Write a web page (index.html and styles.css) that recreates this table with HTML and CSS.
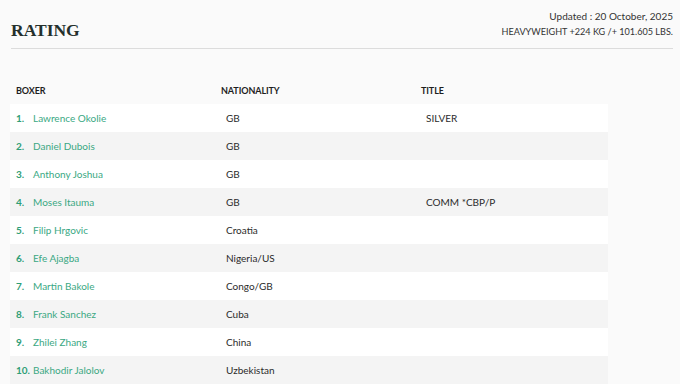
FILE: index.html
```html
<!DOCTYPE html>
<html>
<head>
<meta charset="utf-8">
<link rel="stylesheet" href="styles.css">
</head>
<body>
<div class="page">
  <header class="top">
    <h1 class="title">RATING</h1>
    <div class="meta">
      <div class="updated">Updated : 20 October, 2025</div>
      <div class="weight">HEAVYWEIGHT +224 KG /+ 101.605 LBS.</div>
    </div>
  </header>
  <table class="rating">
    <colgroup><col class="w1"><col class="w2"><col class="w3"></colgroup>
    <thead>
      <tr><th class="c1">BOXER</th><th>NATIONALITY</th><th>TITLE</th></tr>
    </thead>
    <tbody>
      <tr><td class="c1"><span class="num">1.</span><span class="name">Lawrence Okolie</span></td><td>GB</td><td>SILVER</td></tr>
      <tr><td class="c1"><span class="num">2.</span><span class="name">Daniel Dubois</span></td><td>GB</td><td></td></tr>
      <tr><td class="c1"><span class="num">3.</span><span class="name">Anthony Joshua</span></td><td>GB</td><td></td></tr>
      <tr><td class="c1"><span class="num">4.</span><span class="name">Moses Itauma</span></td><td>GB</td><td>COMM *CBP/P</td></tr>
      <tr><td class="c1"><span class="num">5.</span><span class="name">Filip Hrgovic</span></td><td>Croatia</td><td></td></tr>
      <tr><td class="c1"><span class="num">6.</span><span class="name">Efe Ajagba</span></td><td>Nigeria/US</td><td></td></tr>
      <tr><td class="c1"><span class="num">7.</span><span class="name">Martin Bakole</span></td><td>Congo/GB</td><td></td></tr>
      <tr><td class="c1"><span class="num">8.</span><span class="name">Frank Sanchez</span></td><td>Cuba</td><td></td></tr>
      <tr><td class="c1"><span class="num">9.</span><span class="name">Zhilei Zhang</span></td><td>China</td><td></td></tr>
      <tr><td class="c1"><span class="num">10.</span><span class="name">Bakhodir Jalolov</span></td><td>Uzbekistan</td><td></td></tr>
    </tbody>
  </table>
</div>
</body>
</html>
```
FILE: styles.css
```css
html, body {
  margin: 0;
  padding: 0;
  background: #fafafa;
}
body {
  font-family: Lato, Inter, sans-serif;
  color: #2b2b2b;
  font-size: 10px;
}
.page {
  padding: 6px 7px 0 10px;
}
.top {
  display: flex;
  justify-content: space-between;
  align-items: flex-start;
  border-bottom: 1px solid #dcdcdc;
  height: 42px;
  margin-left: 1px;
}
.title {
  margin: 14px 0 0 0;
  font-family: "Liberation Serif", serif;
  font-weight: bold;
  font-size: 17.5px;
  line-height: 20px;
  color: #24302c;
}
.meta {
  text-align: right;
  line-height: 16px;
  color: #333;
  padding-top: 2px;
}
.updated { font-size: 10px; }
.weight { font-size: 9.1px; }
.rating {
  margin-top: 27px;
  border-collapse: collapse;
  table-layout: fixed;
  width: 598px;
}
.w1 { width: 211px; }
.w2 { width: 200px; }
.w3 { width: 187px; }
.rating th, .rating td {
  height: 28px;
  padding: 0 0 0 5px;
  text-align: left;
  vertical-align: middle;
}
.rating th {
  padding-left: 0;
  font-weight: 700;
  font-size: 9px;
  letter-spacing: -0.1px;
  color: #1e1e1e;
}
.rating .c1 { padding-left: 6px; }
.rating tbody tr:nth-child(odd) { background: #ffffff; }
.rating tbody tr:nth-child(even) { background: #f4f4f4; }
.num {
  display: inline-block;
  width: 17px;
  font-weight: 700;
  color: #2f9e76;
}
.name {
  color: #3aa883;
}
```
